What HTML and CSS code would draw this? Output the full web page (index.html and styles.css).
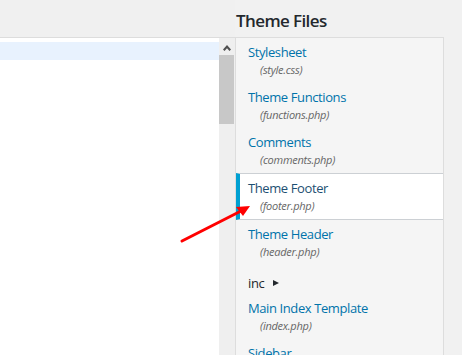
FILE: index.html
```html
<!DOCTYPE html>
<html lang="en">
<head>
  <meta charset="UTF-8" />
  <title>Edit Themes</title>
  <link rel="stylesheet" href="styles.css">
</head>
<body>

  <div class="layout">
    <div class="editor-col">
      <div class="toolbar"></div>
      <div class="editor">
        <div class="code">
          <div class="code-line active"></div>
        </div>
        <div class="scrollbar">
          <div class="scroll-up">
            <svg width="8" height="6" viewBox="0 0 8 6"><path d="M4 0 L8 4.5 L6.5 6 L4 3.2 L1.5 6 L0 4.5 Z" fill="#505050"/></svg>
          </div>
          <div class="scroll-thumb"></div>
        </div>
      </div>
    </div>

    <div class="side-col">
      <h2 class="side-title">Theme Files</h2>
      <ul class="file-list">
        <li class="file"><a href="#">Stylesheet</a><span class="file-name">(style.css)</span></li>
        <li class="file"><a href="#">Theme Functions</a><span class="file-name">(functions.php)</span></li>
        <li class="file"><a href="#">Comments</a><span class="file-name">(comments.php)</span></li>
        <li class="file current"><a href="#">Theme Footer</a><span class="file-name">(footer.php)</span></li>
        <li class="file"><a href="#">Theme Header</a><span class="file-name">(header.php)</span></li>
        <li class="folder">inc <span class="caret"></span></li>
        <li class="file"><a href="#">Main Index Template</a><span class="file-name">(index.php)</span></li>
        <li class="file"><a href="#">Sidebar</a><span class="file-name">(sidebar.php)</span></li>
      </ul>
    </div>
  </div>

  <!-- annotation arrow drawn on top of the screenshot -->
  <svg class="arrow" width="462" height="355" viewBox="0 0 462 355">
    <line x1="182" y1="241" x2="241" y2="211" stroke="#ff0000" stroke-width="3" stroke-linecap="round"/>
    <polygon points="250,206 236,207 243,216" fill="#ff0000"/>
  </svg>

</body>
</html>
```

FILE: styles.css
```css
body {
  margin: 0;
  background: #f1f1f1;
  font-family: "Open Sans", "Noto Sans", sans-serif;
  color: #23282d;
  overflow: hidden;
}

.layout {
  display: flex;
  height: 355px;
}

/* left: code editor */
.editor-col {
  width: 235px;
  display: flex;
  flex-direction: column;
}

.toolbar {
  height: 37px;
  border-bottom: 1px solid #dddddd;
  background: #f0f0f0;
}

.editor {
  flex: 1;
  display: flex;
}

.code {
  flex: 1;
  background: #ffffff;
  padding-top: 4px;
}

.code-line {
  height: 18px;
}

.code-line.active {
  background: #e8f2fe;
}

.scrollbar {
  width: 16px;
  background: #efefef;
}

.scroll-up {
  height: 17px;
  display: flex;
  justify-content: center;
  align-items: center;
  padding-top: 2px;
  box-sizing: border-box;
}

.scroll-thumb {
  height: 69px;
  margin-right: 1px;
  background: #c8c8c8;
}

/* right: theme files */
.side-col {
  width: 209px;
}

.side-title {
  margin: 0;
  height: 37px;
  padding: 9px 0 0 1px;
  box-sizing: border-box;
  font-size: 17px;
  font-weight: 600;
  line-height: 24px;
  letter-spacing: -0.6px;
  color: #23282d;
}

.file-list {
  list-style: none;
  margin: 0;
  padding: 0;
  background: #f5f5f5;
  border: 1px solid #dddddd;
  height: 400px;
}

.file {
  padding: 4px 4px 5px 12px;
  font-size: 13px;
  letter-spacing: -0.4px;
}

.file a {
  display: block;
  line-height: 20px;
  color: #0073aa;
  text-decoration: none;
}

.file-name {
  display: block;
  padding-left: 12px;
  line-height: 16px;
  font-size: 11px;
  font-style: italic;
  letter-spacing: -0.25px;
  color: #666666;
}

.file.current {
  background: #ffffff;
  border-top: 1px solid #ccd0d4;
  border-bottom: 1px solid #ccd0d4;
  border-left: 4px solid #00a0d2;
  padding-left: 8px;
}

.file.current a {
  color: #1d4f72;
}

.folder {
  padding: 8px 4px 1px 12px;
  font-size: 13px;
  line-height: 20px;
  letter-spacing: -0.4px;
  color: #23282d;
}

.caret {
  display: inline-block;
  margin-left: 6px;
  vertical-align: 2px;
  border-left: 6px solid #23282d;
  border-top: 3.5px solid transparent;
  border-bottom: 3.5px solid transparent;
}

.arrow {
  position: absolute;
  left: 0;
  top: 0;
  pointer-events: none;
}
```
